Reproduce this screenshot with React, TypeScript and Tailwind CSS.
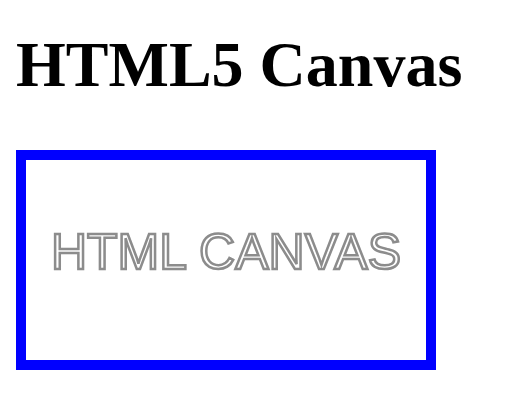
import React from 'react';

const App: React.FC = () => {
  return (
    <div className="min-h-screen bg-white px-4 pt-[28px] font-['Liberation_Serif',serif] text-black">
      <h1 className="text-[64px] font-bold leading-[74px]">HTML5 Canvas</h1>

      <div className="mt-[48px] w-[420px] border-[10px] border-[#0000ff]">
        <div className="flex h-[200px] w-[400px] items-center justify-center pb-4 bg-white">
          <span className="font-['Liberation_Sans',Arial,sans-serif] text-[50px] leading-none text-white [-webkit-text-stroke:2.5px_#8c8c8c] blur-[0.6px]">
            HTML CANVAS
          </span>
        </div>
      </div>
    </div>
  );
};

export default App;
